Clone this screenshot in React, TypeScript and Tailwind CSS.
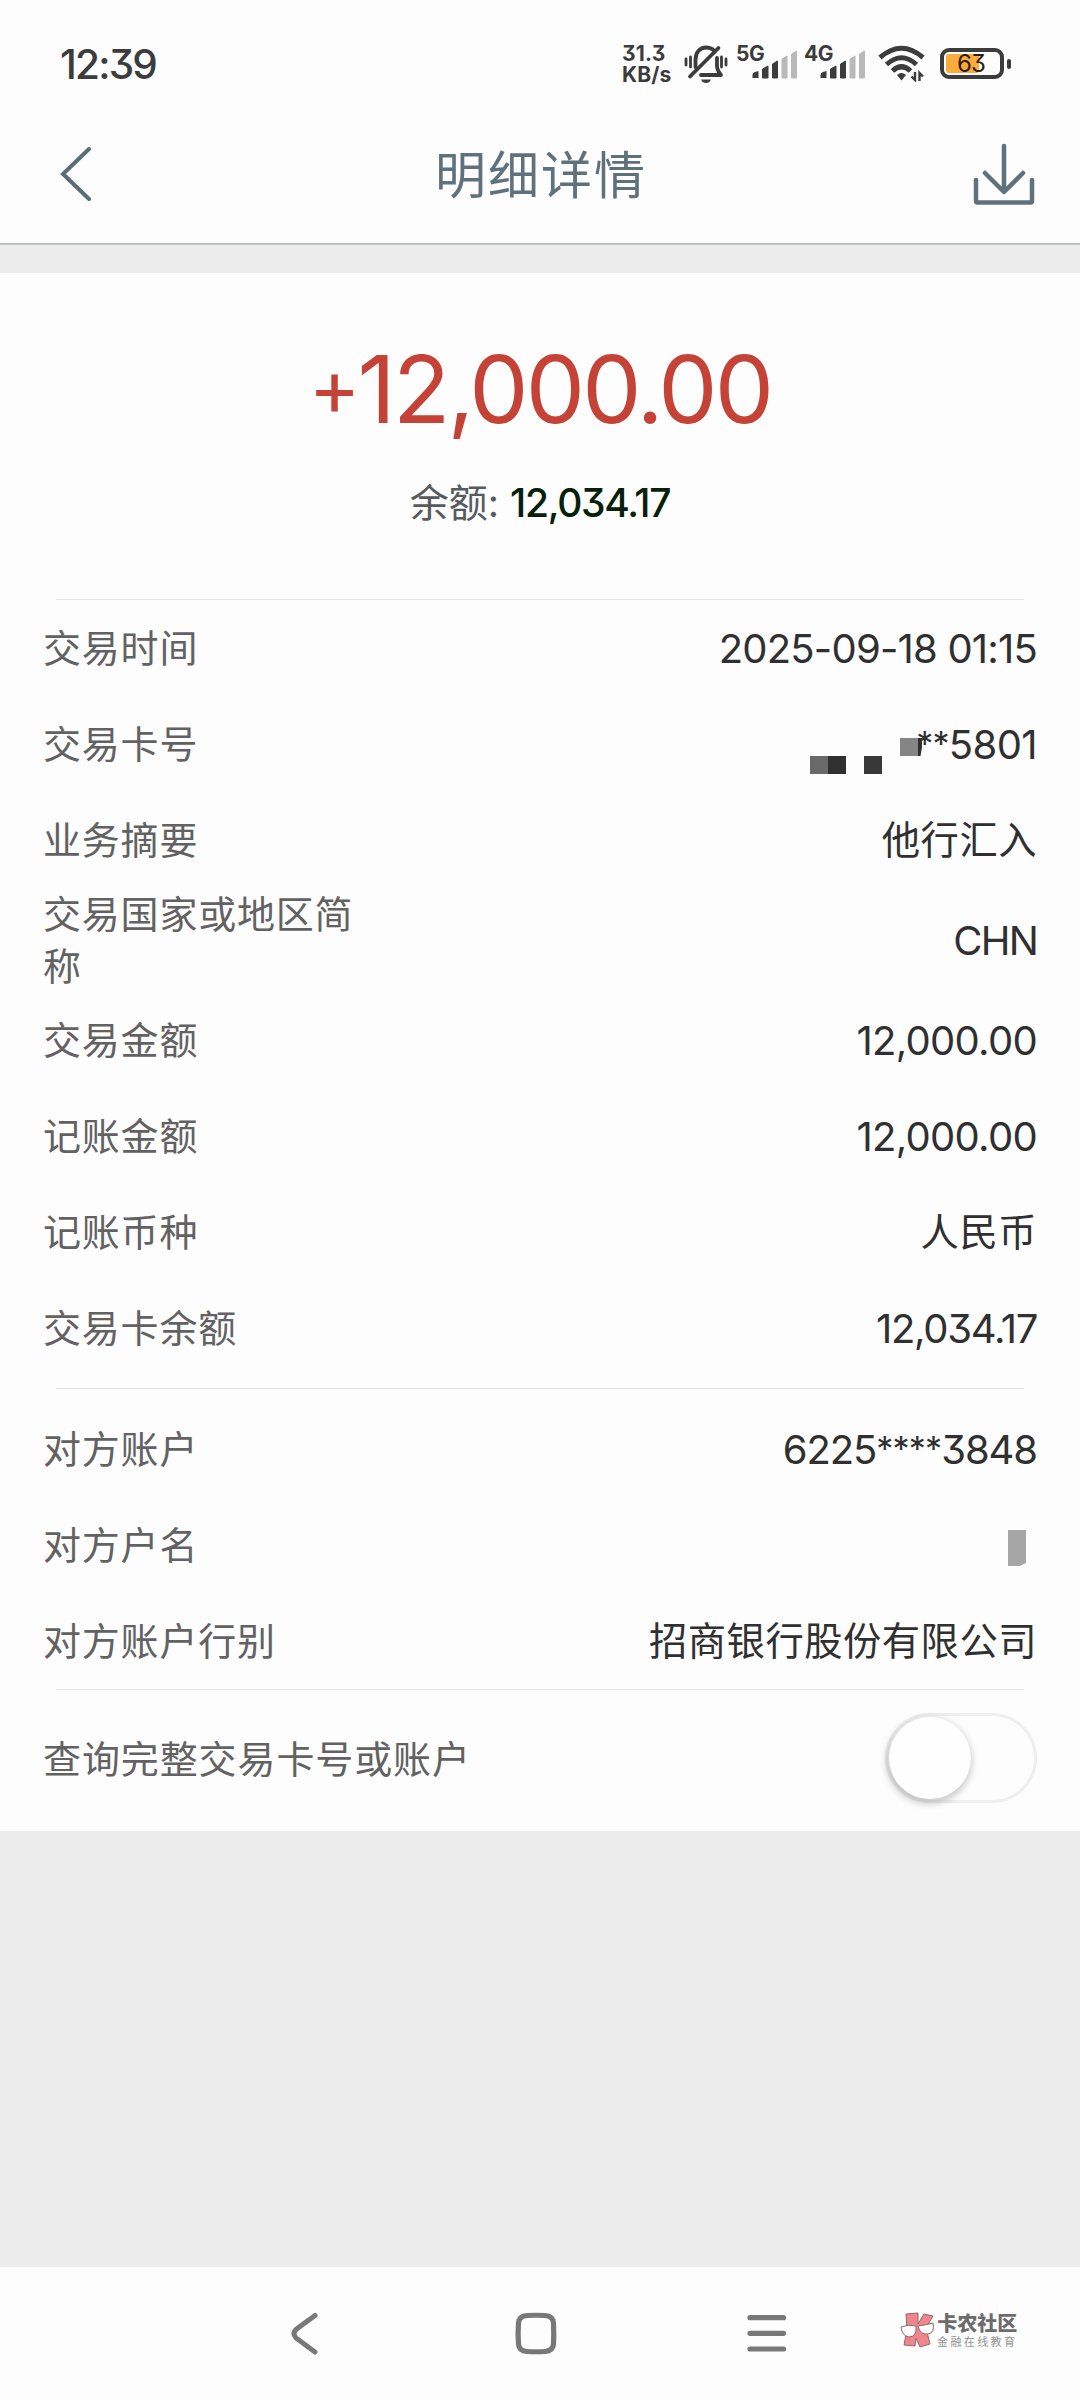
import React from 'react';

const tradeRows = [
  { label: '交易时间', value: '2025-09-18 01:15', tracking: 'tracking-[-0.8px]' },
  { label: '交易卡号', value: '**5801', tracking: 'tracking-[-0.6px]', masked: true },
  { label: '业务摘要', value: '他行汇入' },
  { label: '交易国家或地区简称', value: 'CHN', tracking: 'tracking-[-1.8px]', tall: true },
  { label: '交易金额', value: '12,000.00', tracking: 'tracking-[-0.7px]' },
  { label: '记账金额', value: '12,000.00', tracking: 'tracking-[-0.7px]' },
  { label: '记账币种', value: '人民币' },
  { label: '交易卡余额', value: '12,034.17', tracking: 'tracking-[-1.3px]' },
];

const accountRows = [
  { label: '对方账户', value: '6225****3848', tracking: 'tracking-[-1.1px]' },
  { label: '对方户名', value: '', maskedName: true },
  { label: '对方账户行别', value: '招商银行股份有限公司' },
];

type RowProps = {
  label: string;
  value: string;
  tracking?: string;
  masked?: boolean;
  maskedName?: boolean;
  tall?: boolean;
};

const SignalBars = () => (
  <svg width="46" height="30" viewBox="0 0 46 30">
    <path d="M0.5 29 V26 Q0.5 23.500 3 23 L6.500 22 V29 Z" fill="#3c3c3c" />
    <path d="M10.500 29 V20 L16 17 V29 Z" fill="#3c3c3c" stroke="#3c3c3c" strokeLinejoin="round" />
    <path d="M20.500 29 V15 L25.500 12 V29 Z" fill="#3c3c3c" stroke="#3c3c3c" strokeLinejoin="round" />
    <path d="M30 29 V10 L35 7 V29 Z" fill="#b9b9b9" stroke="#b9b9b9" strokeLinejoin="round" />
    <path d="M39.500 29 V5 L44.500 2 V29 Z" fill="#b9b9b9" stroke="#b9b9b9" strokeLinejoin="round" />
  </svg>
);

const Signal = ({ name }: { name: string }) => (
  <div className="relative w-[62px] h-[34px] mr-[6px] flex justify-end items-end">
    <span className="absolute left-0 top-0 text-[21px] leading-[17px] font-bold tracking-[-0.5px]">{name}</span>
    <SignalBars />
  </div>
);

const StatusBar = () => (
  <div className="h-[110px] pl-[60px] pr-[69px] pt-[45px] flex items-start text-[#3c3c3c]">
    <span className="-mt-[1px] text-[40.5px] leading-[41px] font-medium tracking-[-1.8px]">12:39</span>
    <div className="ml-auto flex items-start">
      <div className="w-[62px] text-[21px] leading-[21px] font-bold -mt-[2px]">
        <div className="tracking-[0.2px]">31.3</div>
        <div className="tracking-[0.1px]">KB/s</div>
      </div>
      <svg className="mr-[8px]" width="44" height="40" viewBox="0 0 44 40" fill="none" stroke="#3c3c3c" strokeWidth="3.800" strokeLinecap="round">
        <path d="M11.500 22 V15 C11.500 7 16 2.500 22 2.500 C25 2.500 28 3.500 30 5.500" />
        <path d="M33 13 V21 Q33 25 37 30 H17" strokeLinejoin="round" />
        <path d="M34.500 3 L6 31.500" />
        <path d="M2 14 V20 M6.500 12 V22 M37.500 12 V22 M42 14 V20" strokeWidth="2.800" />
        <path d="M17 34.500 H27 Q25.500 38 22 38 Q18.500 38 17 34.500 Z" fill="#3c3c3c" stroke="none" />
      </svg>
      <Signal name="5G" />
      <Signal name="4G" />
      <svg className="ml-[6px] mr-[14px]" width="48" height="37" viewBox="0 0 48 37" fill="none" stroke="#3c3c3c" strokeWidth="5">
        <path d="M2 12.500 Q23.500 -6 45 12.500" />
        <path d="M8.500 19.500 Q23.500 6 38.500 19.500" />
        <path d="M14.500 26 Q23.500 17.500 32.500 26" />
        <path d="M19 30 Q23.500 26 28 30 L23.500 35.500 Z" fill="#3c3c3c" stroke="none" />
        <path d="M37 27 V35 L33.500 31.500 M41.500 36 V28 L45 31.500" strokeWidth="2.400" />
      </svg>
      <div className="mt-[3px] flex items-center">
        <div className="w-[64px] h-[31px] rounded-[9px] border-4 border-[#3c3c3c] p-[2px] flex">
          <div className="relative w-[33px] h-[19px] rounded-[3px] bg-[#fbab3c]">
            <span className="absolute left-[11px] top-0 text-[24px] leading-[20px] tracking-[-1px] text-[#2e1d0c]">63</span>
          </div>
        </div>
        <div className="ml-[3px] w-[4px] h-[10px] rounded-[2px] bg-[#3c3c3c]" />
      </div>
    </div>
  </div>
);

const Header = () => (
  <div className="h-[135px] px-[44px] pb-[6px] flex items-center justify-between border-b-2 border-[#b9c4c3]">
    <svg width="62" height="62" viewBox="0 0 62 62" fill="none" stroke="#5a6c75" strokeWidth="4" strokeLinecap="round">
      <path d="M45 6 L19 31 L45 56" />
    </svg>
    <h1 className="pl-[4px] pt-[4px] text-[51px] leading-[60px] tracking-[2px] text-[#5f717d]">明细详情</h1>
    <svg width="64" height="64" viewBox="0 0 64 64" fill="none" stroke="#5f717d" strokeWidth="4.500" strokeLinecap="round" strokeLinejoin="round">
      <path d="M32 4 V49 M13 31 L32 50 L51 31" />
      <path d="M4 38 V59 Q4 60.500 5.500 60.500 H58.500 Q60 60.500 60 59 V38" />
    </svg>
  </div>
);

const Row = ({ label, value, tracking = 'tracking-[0.5px]', masked, maskedName, tall }: RowProps) => {
  const isChinese = /[\u4e00-\u9fa5]/.test(value);
  return (
    <div className={`relative flex items-center justify-between pl-[43px] pr-[43px] ${tall ? 'h-[104px]' : 'h-24'}`}>
      <span className="w-[330px] text-[38px] leading-[52px] tracking-[0.800px] text-[#626262]">{label}</span>
      <span className={`leading-[52px] text-[#303030] ${isChinese ? 'text-[38.300px]' : 'text-[40px] pt-[2px]'} ${tracking}`}>
        {value.split(/(\*+)/).map((part, index) =>
          part.startsWith('*') ? (
            <span key={index} className="relative -top-[3px] text-[34px] leading-none tracking-[-0.8px]">{part}</span>
          ) : (
            part
          )
        )}
      </span>
      {masked && (
        <svg className="absolute right-[158px] top-[42px]" width="112" height="36" viewBox="0 0 112 36">
          <rect x="0" y="18" width="18" height="18" fill="#696969" />
          <rect x="18" y="18" width="18" height="18" fill="#303030" />
          <rect x="54" y="18" width="18" height="18" fill="#383838" />
          <rect x="90" y="0" width="18" height="18" fill="#858585" />
          <path d="M108 0 H112 V9 L110.500 18 H108 Z" fill="#303030" />
        </svg>
      )}
      {maskedName && (
        <svg className="absolute right-[54px] top-[33px]" width="18" height="36" viewBox="0 0 18 36">
          <path d="M0 0 H18 V33 L12 36 H0 Z" fill="#a6a6a6" />
        </svg>
      )}
    </div>
  );
};

const Divider = () => <div className="h-px mx-14 bg-[#e4e4e4]" />;

const Toggle = () => (
  <div className="w-[152px] h-[90px] rounded-full border-[3px] border-[#efefef] p-[1px]">
    <div className="w-[82px] h-[82px] rounded-full bg-[#fefefe] shadow-[-1px_3px_7px_2px_rgba(0,0,0,0.2)]" />
  </div>
);

const CommunityMark = () => (
  <div className="absolute left-[900px] top-[45px] flex items-start gap-[1px]">
    <svg width="36" height="38" viewBox="0 0 36 38" stroke="#8b6b6d" strokeWidth="1">
      <path d="M6 2 L18 1 L18 12 L24 2 L33 4 L26 16 L30 32 L20 35 L16 26 L15 34 L4 33 L7 17 Z" fill="#f1858c" />
      <path d="M1 15 Q8 12 16 14 Q17 25 9 25 Q2 24 1 15 Z" fill="#fdfdfd" />
      <path d="M18 14 Q26 13 33 11 Q35 21 28 22 Q20 23 18 14 Z" fill="#fdfdfd" />
    </svg>
    <div className="pt-[2px] text-center">
      <div className="text-[20px] leading-[21px] font-black text-[#6c6c6c]">卡农社区</div>
      <div className="mt-[1px] text-[11px] leading-[12px] tracking-[2.400px] text-[#929292] whitespace-nowrap">金融在线教育</div>
    </div>
  </div>
);

const NavBar = () => (
  <div className="relative h-[133px] bg-[#fdfdfd] pt-[44px] pl-[291px] flex items-start">
    <svg width="27" height="46" viewBox="0 0 27 46" fill="none" stroke="#787878" strokeWidth="5" strokeLinecap="round">
      <path d="M24 4.500 L5 18.500 Q1 22.500 5 27 L24 41" />
    </svg>
    <svg className="ml-[197px]" width="42" height="46" viewBox="0 0 42 46" fill="none" stroke="#787878" strokeWidth="5.200">
      <path d="M12 4.500 Q21 4 30 4.500 Q38 5 38.500 12 Q39 23 38.500 33 Q38 40 30 40.500 Q21 41 12 40.500 Q4 40 3.500 33 Q2.700 23 3.500 12 Q4 5 12 4.500 Z" />
    </svg>
    <svg className="ml-[190px]" width="40" height="46" viewBox="0 0 40 46" stroke="#787878" strokeWidth="5.200" strokeLinecap="round">
      <path d="M3 6.700 H36.500 M3 22.300 H36.500 M3 38 H36.500" />
    </svg>
    <CommunityMark />
  </div>
);

const App = () => {
  return (
    <div className="w-[1080px] h-[2400px] flex flex-col bg-[#ececec] font-['Inter','Noto_Sans_CJK_SC',sans-serif] [font-feature-settings:'cv09']">
      <div className="bg-[#fdfdfd]">
        <StatusBar />
        <Header />
      </div>

      <div className="mt-[28px] h-[1558px] bg-[#fdfdfd]">
        <div className="h-[326px] pt-[60px] text-center">
          <div className="h-[112px] text-[94px] leading-[112px] tracking-[-2.800px] text-[#c54336]">
            <span className="relative -top-[8px] text-[78px] leading-none">+</span>12,000.00
          </div>
          <div className="mt-[32px] text-[39px] leading-[52px]">
            <span className="text-[#565b60]">余额: </span>
            <span className="font-medium tracking-[-1.300px] text-[#06200a]">12,034.17</span>
          </div>
        </div>
        <Divider />
        {tradeRows.map((row, index) => (
          <Row key={index} {...row} />
        ))}
        <div className="pt-[12px] pb-[12px]">
          <Divider />
        </div>
        {accountRows.map((row, index) => (
          <Row key={index} {...row} />
        ))}
        <Divider />
        <div className="h-[136px] px-[43px] flex items-center justify-between">
          <span className="pt-[2px] text-[38px] tracking-[0.900px] text-[#626262]">查询完整交易卡号或账户</span>
          <Toggle />
        </div>
      </div>

      <div className="mt-auto">
        <NavBar />
      </div>
    </div>
  );
};

export default App;
